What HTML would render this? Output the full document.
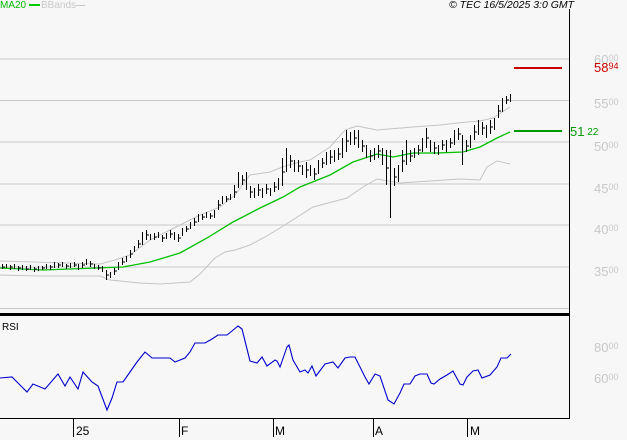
<!DOCTYPE html>
<html><head><meta charset="utf-8"><style>
html,body{margin:0;padding:0;background:#f7f7f7;}
body{width:627px;height:440px;overflow:hidden;position:relative;font-family:"Liberation Sans",sans-serif;}
.t{position:absolute;font-size:11px;white-space:nowrap;line-height:11px;}
.ax{position:absolute;font-size:13px;color:#c8c8c8;line-height:13px;white-space:nowrap;}
.ax sup{font-size:9px;vertical-align:top;position:relative;top:-1px;}
</style></head><body>
<svg width="627" height="440" style="position:absolute;left:0;top:0" shape-rendering="crispEdges">
<g stroke="#c8c8c8" stroke-width="1.3">
<line x1="0" y1="59" x2="569" y2="59"/><line x1="0" y1="100.5" x2="569" y2="100.5"/>
<line x1="0" y1="142" x2="569" y2="142"/><line x1="0" y1="184" x2="569" y2="184"/>
<line x1="0" y1="225" x2="569" y2="225"/><line x1="0" y1="267" x2="569" y2="267"/>
<line x1="0" y1="308.5" x2="569" y2="308.5"/>
</g>
<g fill="none" stroke-width="1" shape-rendering="auto">
<polyline stroke="#c4c4c4" points="0,261 100,264 115,260 130,255 150,240 170,230 200,215 220,207 235,195 250,175 270,172 285,166 300,162 310,160 330,147 345,130 357,126 377,130 413,127 440,125 467,122 480,121 493,118 510,107"/>
<polyline stroke="#c4c4c4" points="0,275 40,276 100,276 110,280 140,283 160,284 190,282 200,274 215,258 225,252 235,250 250,245 265,237 280,228 313,207 347,198 363,187 377,179 400,183 460,179 480,180 487,167 497,161 510,164"/>
<polyline stroke="#00c000" stroke-width="1.3" points="0,268 43,270 123,267 150,262 180,253 207,238 233,222 260,208 283,197 300,187 330,175 353,162 377,154 393,157 413,153 437,153 463,152 480,147 497,138 510,132"/>
</g>
<path fill="none" stroke="#000" stroke-width="1" d="
M2.5,264V269M6.5,264V268M10.5,265V270M14.5,264V269M18.5,266V271M22.5,265V270M26.5,266V271M30.5,265V270M34.5,267V272M38.5,266V271M42.5,266V270M46.5,264V269M50.5,265V270M54.5,262V268M58.5,263V268M62.5,262V267M66.5,264V269M70.5,263V268M74.5,262V267M78.5,264V270M82.5,262V268M86.5,259V265M90.5,261V267M94.5,264V269M98.5,265V270M102.5,266V272M106.5,270V280M110.5,272V278M114.5,268V275M118.5,262V270M122.5,258V265M126.5,256V262M130.5,250V258M134.5,246V252M138.5,240V248M142.5,232V245M146.5,230V240M150.5,234V240M154.5,233V240M158.5,232V238M162.5,235V242M166.5,233V239M170.5,230V238M174.5,232V240M178.5,234V242M182.5,228V236M186.5,226V232M190.5,222V229M194.5,218V226M198.5,214V222M202.5,214V220M206.5,212V218M210.5,213V219M214.5,210V218M218.5,200V210M222.5,196V204M226.5,196V202M230.5,194V200M234.5,185V198M238.5,172V188M242.5,175V185M246.5,172V190M250.5,186V198M254.5,188V198M258.5,184V196M262.5,188V198M266.5,184V194M270.5,188V196M274.5,182V192M278.5,178V190M282.5,158V186M286.5,148V172M290.5,155V168M294.5,160V172M298.5,160V172M302.5,165V175M306.5,162V178M310.5,165V176M314.5,168V180M318.5,160V174M322.5,158V168M326.5,152V165M330.5,150V164M334.5,150V162M338.5,148V160M342.5,138V158M346.5,130V152M350.5,132V145M354.5,130V145M358.5,130V148M362.5,140V152M366.5,145V158M370.5,150V162M374.5,148V160M378.5,145V158M382.5,148V165M386.5,150V185M390.5,150V218M394.5,168V186M398.5,165V182M402.5,150V172M406.5,140V165M410.5,150V162M414.5,148V158M418.5,145V155M422.5,138V152M426.5,128V148M430.5,140V152M434.5,142V154M438.5,145V155M442.5,140V150M446.5,140V152M450.5,138V148M454.5,130V145M458.5,128V140M462.5,135V165M466.5,140V152M470.5,135V148M474.5,125V140M478.5,120V135M482.5,122V135M486.5,125V138M490.5,120V134M494.5,118V130M498.5,105V118M502.5,98V112M506.5,96V104M510.5,94V102
M3,267h2M11,267h2M19,268h2M27,269h2M35,269h2M43,268h2M51,267h2M59,265h2M67,266h2M75,265h2M83,265h2M91,264h2M99,268h2M107,275h2M115,271h2M123,262h2M131,254h2M139,244h2M147,235h2M155,237h2M163,238h2M171,234h2M179,238h2M187,229h2M195,222h2M203,217h2M211,216h2M219,205h2M227,199h2M235,192h2M243,180h2M251,192h2M259,190h2M267,189h2M275,187h2M283,172h2M291,161h2M299,166h2M307,170h2M315,174h2M323,163h2M331,157h2M339,154h2M347,141h2M355,138h2M363,146h2M371,156h2M379,151h2M387,168h2M395,177h2M403,161h2M411,156h2M419,150h2M427,138h2M435,148h2M443,145h2M451,143h2M459,134h2M467,146h2M475,132h2M483,128h2M491,127h2M499,111h2M507,100h2"/>
<line x1="514" y1="68" x2="562" y2="68" stroke="#cc0000" stroke-width="2"/>
<line x1="514" y1="131" x2="562" y2="131" stroke="#009900" stroke-width="2"/>
<line x1="569.5" y1="9" x2="569.5" y2="419" stroke="#000" stroke-width="1"/>
<line x1="0" y1="314.5" x2="570" y2="314.5" stroke="#000" stroke-width="3"/>
<line x1="0" y1="418.5" x2="570" y2="418.5" stroke="#000" stroke-width="1"/>
<g stroke="#000"><line x1="73.5" y1="419" x2="73.5" y2="437"/><line x1="179.5" y1="419" x2="179.5" y2="437"/><line x1="273.5" y1="419" x2="273.5" y2="437"/><line x1="373.5" y1="419" x2="373.5" y2="437"/><line x1="467.5" y1="419" x2="467.5" y2="437"/></g>
<polyline fill="none" stroke="#0000cc" stroke-width="1.1" shape-rendering="auto" points="0,378 12,377 27,392 33,384 45,389 58,374 65,386 70,377 78,389 83,372 92,382 98,386 107,410 112,398 117,382 123,382 130,372 137,362 145,352 152,358 163,358 170,358 175,362 185,358 190,352 195,343 205,343 212,339 218,335 227,335 232,331 238,326 242,329 250,361 257,363 262,357 267,366 275,360 277,361 280,367 287,347 289,345 293,360 300,372 305,370 308,373 312,366 316,376 325,364 333,362 338,368 345,358 350,357 355,357 365,377 369,384 375,374 380,376 388,400 394,404 400,393 404,384 410,384 415,376 420,374 427,374 431,383 434,384 440,379 447,375 453,371 460,384 463,385 467,377 473,371 478,370 482,378 490,375 497,367 501,358 507,358 511,354"/>
</svg>
<div class="t" style="left:0;top:0;color:#00bb00;font-size:10px">MA20 <span style="display:inline-block;width:11px;height:2px;background:#00cc00;vertical-align:middle"></span></div>
<div class="t" style="left:41px;top:0;color:#c8c8c8;font-size:10px">BBands<span style="display:inline-block;width:9px;height:1px;background:#c8c8c8;vertical-align:middle"></span></div>
<div class="t" style="left:449px;top:0;font-style:italic;font-size:10.5px;color:#000">© TEC 16/5/2025 3:0 GMT</div>
<div class="t" style="left:2px;top:322px;font-size:10px;color:#000">RSI</div>
<div class="ax" style="left:594px;top:53px">60<sup>00</sup></div>
<div class="ax" style="left:594px;top:61px;color:#cc0000">58<sup>94</sup></div>
<div class="ax" style="left:594px;top:97px">55<sup>00</sup></div>
<div class="ax" style="left:570px;top:125px;color:#009900">51<sup style="font-size:10px;top:1px"> 22</sup></div>
<div class="ax" style="left:594px;top:140px">50<sup>00</sup></div>
<div class="ax" style="left:594px;top:182px">45<sup>00</sup></div>
<div class="ax" style="left:594px;top:223px">40<sup>00</sup></div>
<div class="ax" style="left:594px;top:265px">35<sup>00</sup></div>
<div class="ax" style="left:594px;top:341px">80<sup>00</sup></div>
<div class="ax" style="left:594px;top:372px">60<sup>00</sup></div>
<div class="t" style="left:76px;top:426px;font-size:12px">25</div>
<div class="t" style="left:181px;top:426px;font-size:12px">F</div>
<div class="t" style="left:275px;top:426px;font-size:12px">M</div>
<div class="t" style="left:375px;top:426px;font-size:12px">A</div>
<div class="t" style="left:470px;top:426px;font-size:12px">M</div>
</body></html>
